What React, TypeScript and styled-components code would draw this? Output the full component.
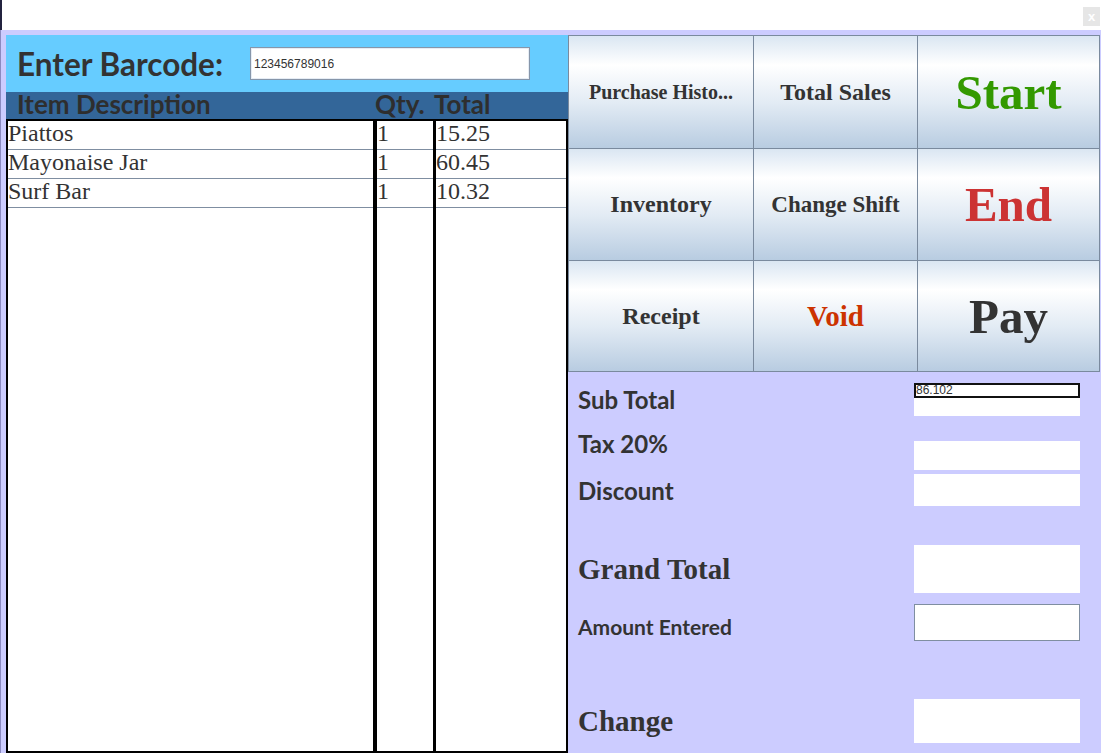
import React from "react";
import styled, { createGlobalStyle } from "styled-components";

const Global = createGlobalStyle`
  html, body { margin: 0; padding: 0; background: #ffffff; overflow: hidden; }
  body { font-family: "Liberation Sans", Arial, sans-serif; }
  * { box-sizing: border-box; }
`;

const Window = styled.div`
  width: 1101px;
  height: 753px;
  display: flex;
  flex-direction: column;
  background: #ccccff;
  border-left: 1px solid #8a8ac0;
`;

const TitleBar = styled.div`
  height: 30px;
  background: #ffffff;
  display: flex;
  justify-content: flex-end;
  align-items: flex-start;
  padding: 7px 1px 0 0;
  margin-left: -1px;
  border-left: 2px solid #23233f;
`;

const CloseButton = styled.div`
  width: 17px;
  height: 19px;
  background: #e6e6e6;
  color: #ffffff;
  font: bold 13px "Liberation Sans", Arial, sans-serif;
  display: flex;
  align-items: center;
  justify-content: center;
`;

const Main = styled.div`
  flex: 1;
  display: flex;
  padding: 5px 1px 0 5px;
  min-height: 0;
`;

const LeftPanel = styled.div`
  width: 562px;
  display: flex;
  flex-direction: column;
`;

const BarcodeBar = styled.div`
  height: 57px;
  background: #66ccff;
  display: grid;
  grid-template-columns: 233px 280px;
  align-items: center;
  padding-left: 11px;
`;

const BarcodeLabel = styled.div`
  font: 700 31.5px "Lato", "Liberation Sans", sans-serif;
  color: #333333;
  white-space: nowrap;
`;

const BarcodeInput = styled.div`
  height: 33px;
  background: #ffffff;
  border: 1px solid #8696aa;
  box-shadow: inset 0 0 0 1px #e6edf5;
  font: 12px "Liberation Sans", Arial, sans-serif;
  color: #333333;
  display: flex;
  align-items: center;
  padding-left: 3px;
`;

const HeaderRow = styled.div`
  height: 27px;
  background: #336699;
  display: grid;
  grid-template-columns: 369px 59px 1fr;
  align-items: start;
`;

const HeaderCell = styled.div<{ $pad?: number }>`
  font: 700 26px/25px "Lato", "Liberation Sans", sans-serif;
  color: #2e2e2e;
  padding-left: ${(p) => p.$pad ?? 0}px;
  white-space: nowrap;
`;

const Table = styled.div`
  flex: 1;
  background: #ffffff;
  border: 2px solid #000000;
  display: flex;
`;

const Column = styled.div<{ $w?: number; $line: number }>`
  ${(p) => (p.$w ? `width: ${p.$w}px;` : "flex: 1;")}
  border-right: ${(p) => p.$line}px solid #000000;
  display: flex;
  flex-direction: column;
`;

const Cell = styled.div`
  height: 29px;
  border-bottom: 1px solid #7f8ea1;
  font: 24px/25px "Liberation Serif", "Times New Roman", serif;
  color: #333333;
  white-space: nowrap;
  overflow: hidden;
`;

const RightPanel = styled.div`
  width: 532px;
  display: flex;
  flex-direction: column;
`;

const ButtonGrid = styled.div`
  display: grid;
  grid-template-columns: 184px 163px 1fr;
  grid-template-rows: 112px 111px 110px;
  gap: 1px;
  border: 1px solid #7a8a9e;
  background: #7a8a9e;
`;

const ActionButton = styled.button<{ $size: number; $color?: string }>`
  border: none;
  margin: 0;
  padding: 0;
  background: linear-gradient(
    to bottom,
    #dae6f2 0%,
    #ffffff 26%,
    #e2ebf4 60%,
    #b8cce1 100%
  );
  font-family: "Liberation Serif", "Times New Roman", serif;
  font-weight: 700;
  font-size: ${(p) => p.$size}px;
  color: ${(p) => p.$color ?? "#333333"};
  display: flex;
  align-items: center;
  justify-content: center;
  white-space: nowrap;
`;

const Summary = styled.div`
  flex: 1;
  display: flex;
  flex-direction: column;
  padding: 0 20px 0 10px;
`;

const SummaryRow = styled.div<{ $h?: number }>`
  ${(p) => (p.$h ? `height: ${p.$h}px;` : "flex: 1;")}
  display: grid;
  grid-template-columns: 1fr 166px;
  align-items: start;
`;

const SansLabel = styled.div<{ $mt: number; $size: number }>`
  margin-top: ${(p) => p.$mt}px;
  font: 700 ${(p) => p.$size}px/${(p) => p.$size + 5}px "Lato", "Liberation Sans", sans-serif;
  color: #333333;
  white-space: nowrap;
`;

const SerifLabel = styled.div<{ $mt: number }>`
  margin-top: ${(p) => p.$mt}px;
  font: 700 29px/34px "Liberation Serif", "Times New Roman", serif;
  color: #333333;
  white-space: nowrap;
`;

const Field = styled.div<{ $mt: number; $h: number; $framed?: boolean }>`
  margin-top: ${(p) => p.$mt}px;
  height: ${(p) => p.$h}px;
  background: #ffffff;
  border: ${(p) => (p.$framed ? "1px solid #7f8ea1" : "none")};
`;

const InnerInput = styled.div`
  height: 15px;
  border: 2px solid #111111;
  font: 12px/11px "Liberation Sans", Arial, sans-serif;
  color: #333333;
`;

const items = [
  { name: "Piattos", qty: "1", total: "15.25" },
  { name: "Mayonaise Jar", qty: "1", total: "60.45" },
  { name: "Surf Bar", qty: "1", total: "10.32" },
];

export default function App() {
  return (
    <>
      <Global />
      <Window>
        <TitleBar>
          <CloseButton>x</CloseButton>
        </TitleBar>
        <Main>
          <LeftPanel>
            <BarcodeBar>
              <BarcodeLabel>Enter Barcode:</BarcodeLabel>
              <BarcodeInput>123456789016</BarcodeInput>
            </BarcodeBar>
            <HeaderRow>
              <HeaderCell $pad={11}>Item Description</HeaderCell>
              <HeaderCell>Qty.</HeaderCell>
              <HeaderCell>Total</HeaderCell>
            </HeaderRow>
            <Table>
              <Column $w={369} $line={4}>
                {items.map((it) => (
                  <Cell key={it.name}>{it.name}</Cell>
                ))}
              </Column>
              <Column $w={59} $line={3}>
                {items.map((it) => (
                  <Cell key={it.name}>{it.qty}</Cell>
                ))}
              </Column>
              <Column $line={0}>
                {items.map((it) => (
                  <Cell key={it.name}>{it.total}</Cell>
                ))}
              </Column>
            </Table>
          </LeftPanel>
          <RightPanel>
            <ButtonGrid>
              <ActionButton $size={20}>Purchase Histo...</ActionButton>
              <ActionButton $size={24}>Total Sales</ActionButton>
              <ActionButton $size={49} $color="#339900">Start</ActionButton>
              <ActionButton $size={24}>Inventory</ActionButton>
              <ActionButton $size={23}>Change Shift</ActionButton>
              <ActionButton $size={49} $color="#cc3333">End</ActionButton>
              <ActionButton $size={24}>Receipt</ActionButton>
              <ActionButton $size={29} $color="#cc3300">Void</ActionButton>
              <ActionButton $size={49}>Pay</ActionButton>
            </ButtonGrid>
            <Summary>
              <SummaryRow $h={49}>
                <SansLabel $mt={13} $size={24}>Sub Total</SansLabel>
                <Field $mt={11} $h={33}>
                  <InnerInput>86.102</InnerInput>
                </Field>
              </SummaryRow>
              <SummaryRow $h={50}>
                <SansLabel $mt={8} $size={24}>Tax 20%</SansLabel>
                <Field $mt={20} $h={29} />
              </SummaryRow>
              <SummaryRow $h={50}>
                <SansLabel $mt={5} $size={24}>Discount</SansLabel>
                <Field $mt={3} $h={32} />
              </SummaryRow>
              <SummaryRow $h={77}>
                <SerifLabel $mt={31}>Grand Total</SerifLabel>
                <Field $mt={24} $h={48} />
              </SummaryRow>
              <SummaryRow $h={63}>
                <SansLabel $mt={16} $size={21}>Amount Entered</SansLabel>
                <Field $mt={6} $h={37} $framed />
              </SummaryRow>
              <SummaryRow>
                <SerifLabel $mt={43}>Change</SerifLabel>
                <Field $mt={38} $h={44} />
              </SummaryRow>
            </Summary>
          </RightPanel>
        </Main>
      </Window>
    </>
  );
}
